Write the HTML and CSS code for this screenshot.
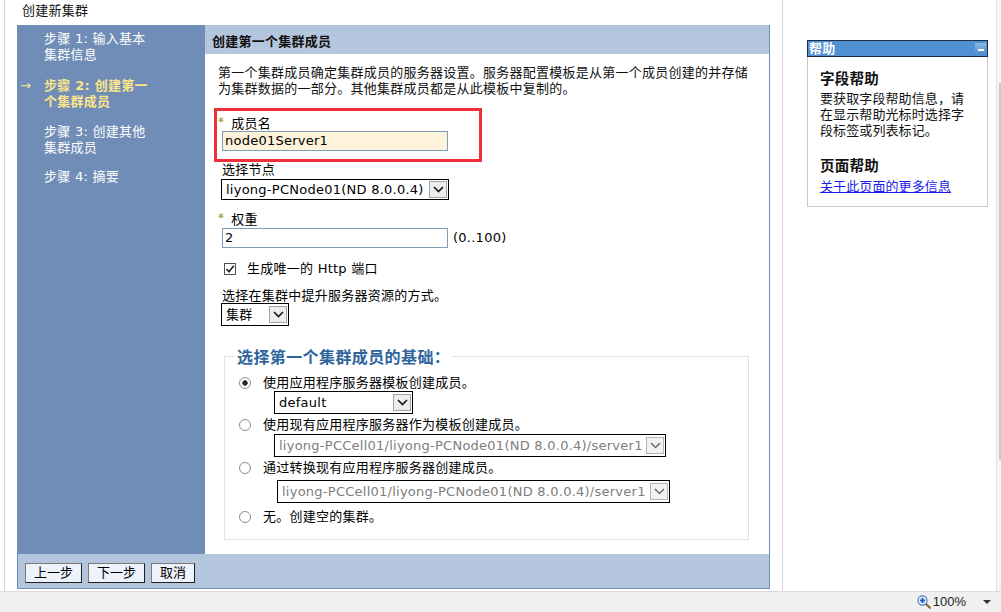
FILE: index.html
```html
<!DOCTYPE html>
<html lang="zh-CN">
<head>
<meta charset="utf-8">
<title>创建新集群</title>
<link rel="stylesheet" href="styles.css">
</head>
<body>
<div class="page">
  <div class="main">
    <div class="workarea">
      <div class="title">创建新集群</div>
      <div class="wizard">
        <div class="wiz-body">
          <div class="steps">
            <div class="step s1">步骤 1: 输入基本<br>集群信息</div>
            <div class="step s2 current"><span class="arrow">→</span>步骤 2: 创建第一<br>个集群成员</div>
            <div class="step s3">步骤 3: 创建其他<br>集群成员</div>
            <div class="step">步骤 4: 摘要</div>
          </div>
          <div class="panel">
            <div class="panel-head">创建第一个集群成员</div>
            <div class="panel-content">
              <p class="intro">第一个集群成员确定集群成员的服务器设置。服务器配置模板是从第一个成员创建的并存储<br>为集群数据的一部分。其他集群成员都是从此模板中复制的。</p>
              <div class="highlight">
                <div class="label tight"><span class="req">*</span>成员名</div>
                <div class="field active">node01Server1</div>
              </div>
              <div class="label plain">选择节点</div>
              <div class="select sel-node">
                <span class="val">liyong-PCNode01(ND 8.0.0.4)</span>
                <span class="drop"><svg width="11" height="7" viewBox="0 0 11 7"><polyline points="1,1 5.5,5.5 10,1" fill="none" stroke="#1a1a1a" stroke-width="1.7"/></svg></span>
              </div>
              <div class="label weight"><span class="req">*</span>权重</div>
              <div class="field-row">
                <div class="field">2</div>
                <span class="range">(0..100)</span>
              </div>
              <div class="check-row">
                <span class="checkbox"><svg width="10" height="10" viewBox="0 0 10 10"><polyline points="1.5,5 4,7.8 8.8,1.8" fill="none" stroke="#222" stroke-width="1.6"/></svg></span>
                <span class="check-label">生成唯一的 Http 端口</span>
              </div>
              <div class="label plain method">选择在集群中提升服务器资源的方式。</div>
              <div class="select sel-cluster">
                <span class="val">集群</span>
                <span class="drop"><svg width="11" height="7" viewBox="0 0 11 7"><polyline points="1,1 5.5,5.5 10,1" fill="none" stroke="#1a1a1a" stroke-width="1.7"/></svg></span>
              </div>
              <fieldset class="basis">
                <legend>选择第一个集群成员的基础：</legend>
                <div class="opt"><span class="radio on"></span><span class="opt-label">使用应用程序服务器模板创建成员。</span></div>
                <div class="select sel-default">
                  <span class="val">default</span>
                  <span class="drop"><svg width="11" height="7" viewBox="0 0 11 7"><polyline points="1,1 5.5,5.5 10,1" fill="none" stroke="#1a1a1a" stroke-width="1.7"/></svg></span>
                </div>
                <div class="opt opt2"><span class="radio"></span><span class="opt-label">使用现有应用程序服务器作为模板创建成员。</span></div>
                <div class="select disabled sel-server">
                  <span class="val">liyong-PCCell01/liyong-PCNode01(ND 8.0.0.4)/server1</span>
                  <span class="drop"><svg width="11" height="7" viewBox="0 0 11 7"><polyline points="1,1 5.5,5.5 10,1" fill="none" stroke="#6a6a6a" stroke-width="1.5"/></svg></span>
                </div>
                <div class="opt opt3"><span class="radio"></span><span class="opt-label">通过转换现有应用程序服务器创建成员。</span></div>
                <div class="select disabled sel-convert">
                  <span class="val">liyong-PCCell01/liyong-PCNode01(ND 8.0.0.4)/server1</span>
                  <span class="drop"><svg width="11" height="7" viewBox="0 0 11 7"><polyline points="1,1 5.5,5.5 10,1" fill="none" stroke="#6a6a6a" stroke-width="1.5"/></svg></span>
                </div>
                <div class="opt opt4"><span class="radio"></span><span class="opt-label">无。创建空的集群。</span></div>
              </fieldset>
            </div>
          </div>
        </div>
        <div class="wiz-foot">
          <button class="btn">上一步</button>
          <button class="btn">下一步</button>
          <button class="btn">取消</button>
        </div>
      </div>
    </div>
    <div class="helpcol">
      <div class="help">
        <div class="help-head">
          <span class="help-title">帮助</span>
          <span class="minbtn"><span class="dash"></span></span>
        </div>
        <div class="help-body">
          <h3 class="help-h">字段帮助</h3>
          <p class="help-p">要获取字段帮助信息，请<br>在显示帮助光标时选择字<br>段标签或列表标记。</p>
          <h3 class="help-h page-h">页面帮助</h3>
          <a class="help-link" href="#">关于此页面的更多信息</a>
        </div>
      </div>
    </div>
    <div class="scroll"><div class="thumb"></div></div>
  </div>
  <div class="status">
    <svg class="zoom-icon" width="14" height="14" viewBox="0 0 14 14">
      <line x1="8.5" y1="8.5" x2="12.8" y2="12.8" stroke="#8a6234" stroke-width="2.2" stroke-linecap="round"/>
      <circle cx="5.5" cy="5.5" r="4.6" fill="#dfeaf7" stroke="#4d79b0" stroke-width="1.1"/>
      <line x1="3" y1="5.5" x2="8" y2="5.5" stroke="#1b5fc4" stroke-width="1.8"/>
      <line x1="5.5" y1="3" x2="5.5" y2="8" stroke="#1b5fc4" stroke-width="1.8"/>
    </svg>
    <span class="zoom-text">100%</span>
    <span class="zoom-arrow"></span>
  </div>
</div>
</body>
</html>
```
FILE: styles.css
```css
* { box-sizing: border-box; }
html, body { margin: 0; padding: 0; }
body {
  width: 1001px;
  height: 612px;
  overflow: hidden;
  background: #fff;
  color: #000;
  font-family: "DejaVu Sans", "Noto Sans CJK SC", sans-serif;
  font-size: 13px;
  line-height: 16px;
  letter-spacing: 0.25px;
}
.page { display: flex; flex-direction: column; height: 612px; }
.main { display: flex; height: 591px; }

.workarea {
  width: 778px;
  margin-left: 4px;
  border-left: 1px solid #d4d4d4;
  padding-left: 12px;
}
.title { height: 25px; padding: 3px 0 0 5px; color: #111; }

.wizard { width: 753px; display: flex; flex-direction: column; }
.wiz-body { display: flex; height: 529px; }
.steps {
  width: 188px;
  background: #6f8db6;
  color: #fff;
  padding: 6px 0 0 27px;
}
.step { white-space: nowrap; }
.step.s1 { margin-bottom: 15px; }
.step.s2 { margin-bottom: 14px; }
.step.s3 { margin-bottom: 13px; }
.step.current { color: #fbe48a; font-weight: bold; }
.arrow { display: inline-block; width: 24px; margin-left: -24px; font-weight: normal; }

.panel {
  flex: 1;
  border-right: 1px solid #6f8db6;
  display: flex;
  flex-direction: column;
}
.panel-head {
  height: 29px;
  background: #b4c5de;
  padding: 9px 0 0 7px;
  font-weight: bold;
  color: #111;
}
.panel-content { padding: 11px 13px 0; }
.intro { margin: 0; color: #111; white-space: nowrap; }

.highlight {
  width: 268px;
  margin: 11px 0 0 -4px;
  border: 3px solid #ee2f3b;
  padding: 5px 0 8px 1px;
}
.label { line-height: 16px; white-space: nowrap; }
.label.tight { line-height: 15px; }
.label.plain { padding-left: 4px; }
.req { color: #9e8a1f; font-size: 12px; margin-right: 7px; vertical-align: top; line-height: 13px; }

.field {
  width: 226px;
  height: 20px;
  margin-left: 4px;
  border: 1px solid #7f9db9;
  padding-left: 2px;
  line-height: 18px;
  background: #fff;
  white-space: nowrap;
}
.field.active { background: #fdf2da; }

.select {
  display: flex;
  align-items: center;
  height: 21px;
  border: 1px solid #000;
  background: #fff;
  padding-left: 4px;
  white-space: nowrap;
}
.select .val { flex: 1; overflow: hidden; line-height: 16px; }
.select .drop {
  width: 18px;
  height: 17px;
  margin-right: 1px;
  background: #ededed;
  border: 1px solid #a3a3a3;
  display: flex;
  align-items: center;
  justify-content: center;
  flex: none;
}
.select.disabled .val { color: #7d7d7d; }
.select.disabled .drop { background: #f2f2f2; border-color: #b4b4b4; }

.sel-node { width: 228px; margin: 1px 0 0 3px; }
.label.weight { margin-top: 12px; }
.field-row { display: flex; align-items: center; height: 20px; }
.range { margin-left: 5px; }

.check-row { display: flex; align-items: center; height: 16px; margin-top: 13px; }
.checkbox {
  width: 12px;
  height: 12px;
  margin-left: 6px;
  border: 1px solid #4f4f4f;
  background: #fff;
  display: flex;
  align-items: center;
  justify-content: center;
}
.check-label { margin-left: 11px; }

.label.method { margin-top: 11px; }
.sel-cluster { width: 68px; height: 23px; margin: -1px 0 0 3px; }

.basis {
  width: 525px;
  margin: 18px 0 0 6px;
  border: 1px solid #e1e1e1;
  padding: 7px 10px 14px;
  min-width: 0;
}
.basis legend {
  padding: 4px 2px 0;
  font-size: 16px;
  line-height: 20px;
  font-weight: bold;
  color: #2e649c;
  letter-spacing: 0.4px;
}
.opt { display: flex; align-items: center; height: 16px; }
.radio {
  width: 12px;
  height: 12px;
  margin-left: 4px;
  border-radius: 50%;
  border: 1px solid #8c8c8c;
  background: #fff;
  flex: none;
}
.radio.on { background: radial-gradient(circle, #2a2a2a 0 2.4px, #fff 3px); }
.opt-label { margin-left: 12px; white-space: nowrap; }
.opt2 { margin-top: 3px; }
.opt3 { margin-top: 3px; }
.opt4 { margin-top: 6px; }
.sel-default { width: 139px; height: 23px; margin-left: 39px; }
.sel-server { width: 392px; height: 23px; margin: 1px 0 0 39px; }
.sel-convert { width: 393px; height: 23px; margin: 4px 0 0 42px; }

.wiz-foot {
  height: 35px;
  background: #b4c5de;
  border: 1px solid #6f8db6;
  border-top: none;
  padding: 9px 0 0 7px;
  display: flex;
  align-items: flex-start;
  gap: 6px;
}
.btn {
  height: 20px;
  padding: 0 8px;
  margin: 0;
  background: #edf2fb;
  border: 1px solid;
  border-color: #7a7a7a #1f1f1f #1f1f1f #7a7a7a;
  font-family: "DejaVu Sans", "Noto Sans CJK SC", sans-serif;
  font-size: 13px;
  line-height: 18px;
  letter-spacing: 0;
  color: #000;
}

.helpcol {
  width: 214px;
  border-left: 1px solid #d4d4d4;
  padding: 40px 0 0 24px;
}
.help { width: 181px; }
.help-head {
  height: 17px;
  background: #5191d3;
  border: 1px solid #1d2f48;
  display: flex;
  align-items: center;
}
.help-title { color: #fff; font-weight: bold; line-height: 15px; padding-left: 1px; }
.minbtn {
  margin-left: auto;
  margin-right: 1px;
  width: 11px;
  height: 11px;
  background: linear-gradient(#8dbbe8, #4f8cca);
  display: flex;
  align-items: flex-end;
  justify-content: center;
  padding-bottom: 3px;
}
.dash { width: 6px; height: 2px; background: #fff; }
.help-body {
  border: 1px solid #c9c9c9;
  border-top: none;
  padding: 13px 12px 11px 12px;
}
.help-h { margin: 0; font-size: 14.5px; line-height: 18px; font-weight: bold; color: #111; }
.help-p { margin: 3px 0 0; color: #111; white-space: nowrap; letter-spacing: 0.1px; }
.help-h.page-h { margin-top: 18px; }
.help-link { display: block; margin-top: 4px; color: #1a1aee; text-decoration: underline; white-space: nowrap; letter-spacing: 0.1px; }

.scroll {
  width: 5px;
  background: #f6f6f6;
  border-left: 1px solid #e2e2e2;
  padding-top: 83px;
}
.thumb { width: 2px; height: 377px; margin-left: auto; background: #c9c9c9; }

.status {
  height: 21px;
  background: #f0f0f0;
  border-top: 1px solid #dadada;
  display: flex;
  align-items: center;
  justify-content: flex-end;
  padding-right: 10px;
  letter-spacing: 0;
}
.zoom-icon { margin-right: 2px; }
.zoom-text { font-family: "Liberation Sans", sans-serif; font-size: 13px; color: #222; }
.zoom-arrow {
  margin-left: 17px;
  width: 0;
  height: 0;
  border-left: 4px solid transparent;
  border-right: 4px solid transparent;
  border-top: 4px solid #333;
}
```
